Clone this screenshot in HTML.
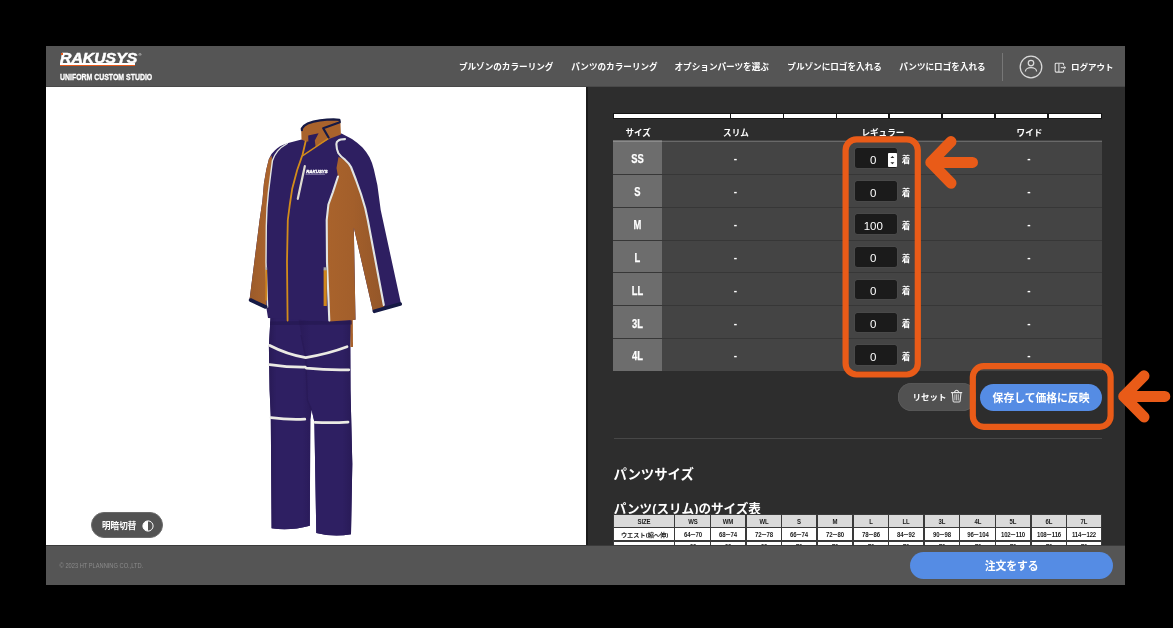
<!DOCTYPE html>
<html lang="ja">
<head>
<meta charset="utf-8">
<title>RAKUSYS UNIFORM CUSTOM STUDIO</title>
<style>
*{box-sizing:border-box;margin:0;padding:0}
html,body{width:1173px;height:628px;overflow:hidden;background:#000}
body{position:relative;font-family:"Liberation Sans",sans-serif;color:#fff}
.abs,.t{position:absolute}
.t{overflow:visible;display:block}
#win{position:absolute;left:46px;top:46px;width:1079px;height:539px;background:#2d2d2d;overflow:hidden;filter:blur(.35px)}
.txt{position:absolute;white-space:nowrap;line-height:1}
.t>svg{display:block;overflow:visible}
.rt{white-space:nowrap;line-height:1;font-weight:bold;color:#fff;font-family:"Liberation Sans","Noto Sans CJK JP",sans-serif}
</style>
</head>
<body>

<div id="win"><div class="abs" style="left:-46px;top:-46px;width:1173px;height:628px">
<div class="abs" style="left:46px;top:46px;width:1079px;height:40.8px;background:#555;border-bottom:1.5px solid #494949"></div>
<div class="abs" style="left:46px;top:86.8px;width:540.2px;height:460px;background:#fff"></div>
<div class="abs" style="left:586.2px;top:86.8px;width:1.7px;height:460px;background:#1b1b1b"></div>
<svg class="t" style="left:58px;top:48px" width="90" height="18" viewBox="58 48 90 18"><text x="60" y="62.9" font-family="Liberation Sans, sans-serif" font-weight="bold" font-style="italic" font-size="13.8" fill="#fff" stroke="#fff" stroke-width=".45" textLength="77.2" lengthAdjust="spacingAndGlyphs">RAKUSYS</text></svg>
<div class="abs" style="left:59.5px;top:63px;width:75px;height:2px;background:#fff"></div>
<div class="abs" style="left:59.5px;top:65px;width:75px;height:1.2px;background:#e8591a"></div>
<div class="abs" style="left:61px;top:53px;width:2px;height:2px;background:#e8591a"></div>
<div class="txt" style="left:138.5px;top:52.6px;font-size:4px;">&reg;</div>
<svg class="t" style="left:58px;top:68px" width="110" height="16" viewBox="58 68 110 16"><text x="60" y="80.05" font-family="Liberation Sans, sans-serif" font-weight="bold" font-size="9.6" fill="#fff" stroke="#fff" stroke-width=".3" textLength="92.2" lengthAdjust="spacingAndGlyphs">UNIFORM CUSTOM STUDIO</text></svg>
<span class="t rt" style="left:458.9px;top:63px;width:95.9px;height:10.9px;font-size:8.6px;">プルゾンのカラーリング</span>
<span class="t rt" style="left:571.3px;top:63px;width:87.3px;height:10.9px;font-size:8.6px;">パンツのカラーリング</span>
<span class="t rt" style="left:674.5px;top:63px;width:95.9px;height:10.9px;font-size:8.6px;">オプションパーツを選ぶ</span>
<span class="t rt" style="left:787.3px;top:63px;width:95.9px;height:10.9px;font-size:8.6px;">プルゾンにロゴを入れる</span>
<span class="t rt" style="left:899.3px;top:63px;width:87.3px;height:10.9px;font-size:8.6px;">パンツにロゴを入れる</span>
<div class="abs" style="left:1002.3px;top:52.5px;width:1px;height:28.5px;background:#777"></div>
<svg class="t" style="left:1019.4px;top:54.7px" width="24" height="24" viewBox="-12 -12 24 24" fill="none" stroke="#dadada" stroke-width="1.25">
<circle cx="0" cy="0" r="10.8"/><circle cx="0" cy="-4" r="2.75"/><path d="M-5.6 4.5A5.6 3.9 0 0 1 5.6 4.5"/></svg>
<svg class="t" style="left:1054px;top:62px" width="13" height="11" viewBox="0 0 13 11" fill="none" stroke="#e0e0e0" stroke-width="1.05" stroke-linejoin="round">
<path d="M9.6 3.4V2.2a1 1 0 0 0-1-1H2.2a1 1 0 0 0-1 1v6.9a1 1 0 0 0 1 1h6.4a1 1 0 0 0 1-1V7.9"/><path d="M4.9 1.4v8.5"/><path d="M6.8 5.65h3.4"/><path d="M10.2 4.2l1.7 1.45-1.7 1.45z" fill="#e0e0e0" stroke-width=".5"/></svg>
<span class="t rt" style="left:1070.9px;top:63.3px;width:44.4px;height:10.8px;font-size:8.5px;">ログアウト</span>
<div class="abs" style="left:613px;top:113px;width:489.4px;height:6.2px;background:#151515"></div>
<div class="abs" style="left:613.8px;top:113.6px;width:116px;height:4.6px;background:#fff"></div>
<div class="abs" style="left:731.4px;top:113.6px;width:51.3px;height:4.6px;background:#fff"></div>
<div class="abs" style="left:784.3px;top:113.6px;width:51.3px;height:4.6px;background:#fff"></div>
<div class="abs" style="left:837.2px;top:113.6px;width:51.3px;height:4.6px;background:#fff"></div>
<div class="abs" style="left:890.1px;top:113.6px;width:51.3px;height:4.6px;background:#fff"></div>
<div class="abs" style="left:943px;top:113.6px;width:51.3px;height:4.6px;background:#fff"></div>
<div class="abs" style="left:995.9px;top:113.6px;width:51.3px;height:4.6px;background:#fff"></div>
<div class="abs" style="left:1048.8px;top:113.6px;width:52px;height:4.6px;background:#fff"></div>
<span class="t rt" style="left:625.4px;top:128.8px;width:27.4px;height:10.8px;font-size:8.6px;">サイズ</span>
<span class="t rt" style="left:723.1px;top:128.8px;width:27.4px;height:10.8px;font-size:8.6px;">スリム</span>
<span class="t rt" style="left:861.4px;top:128.8px;width:45px;height:10.8px;font-size:8.6px;">レギュラー</span>
<span class="t rt" style="left:1016.6px;top:128.8px;width:27.4px;height:10.8px;font-size:8.6px;">ワイド</span>
<div class="abs" style="left:613.3px;top:140.1px;width:488.5px;height:34.2px;background:#444"></div>
<div class="abs" style="left:613.3px;top:140.1px;width:48.9px;height:34.2px;background:#6d6d6d"></div>
<div class="abs" style="left:613.3px;top:140.9px;width:488.5px;height:1.3px;background:rgba(255,255,255,.2)"></div>
<div class="txt" style="left:613.3px;width:48.9px;text-align:center;top:153.2px;font-size:12.2px;font-weight:bold;-webkit-text-stroke:.25px #fff;transform:scaleX(.77)">SS</div>
<div class="txt" style="left:725px;width:21px;text-align:center;top:154.2px;font-size:10px;font-weight:bold">-</div>
<div class="txt" style="left:1018.5px;width:21px;text-align:center;top:154.2px;font-size:10px;font-weight:bold">-</div>
<div class="abs" style="left:855px;top:148.2px;width:41.8px;height:19.8px;border-radius:2.5px;background:#1b1b1b;box-shadow:0 0 0 .5px #4f4f4f"></div>
<div class="txt" style="left:855px;width:36.6px;text-align:center;top:154.8px;font-size:11.5px">0</div>
<span class="t rt" style="left:901.8px;top:156px;width:9.8px;height:10.8px;font-size:8.6px;">着</span>
<div class="abs" style="left:888.2px;top:152.7px;width:8.7px;height:13.9px;background:#fff;border-radius:.8px"></div>
<svg class="t" style="left:888.2px;top:152.7px" width="8.7" height="13.9" viewBox="0 0 8.7 13.9"><path d="M2.4 5l2-2.1 2 2.1zM2.4 9.2l2 2.1 2-2.1z" fill="#2a2a2a"/></svg>
<div class="abs" style="left:613.3px;top:174.2px;width:488.5px;height:32.8px;background:#444"></div>
<div class="abs" style="left:613.3px;top:174.2px;width:48.9px;height:32.8px;background:#6d6d6d"></div>
<div class="abs" style="left:613.3px;top:173.8px;width:488.5px;height:1px;background:#373737"></div>
<div class="txt" style="left:613.3px;width:48.9px;text-align:center;top:186.1px;font-size:12.2px;font-weight:bold;-webkit-text-stroke:.25px #fff;transform:scaleX(.77)">S</div>
<div class="txt" style="left:725px;width:21px;text-align:center;top:187.1px;font-size:10px;font-weight:bold">-</div>
<div class="txt" style="left:1018.5px;width:21px;text-align:center;top:187.1px;font-size:10px;font-weight:bold">-</div>
<div class="abs" style="left:855px;top:181.1px;width:41.8px;height:19.8px;border-radius:2.5px;background:#1b1b1b;box-shadow:0 0 0 .5px #4f4f4f"></div>
<div class="txt" style="left:855px;width:36.6px;text-align:center;top:187.7px;font-size:11.5px">0</div>
<span class="t rt" style="left:901.8px;top:188.9px;width:9.8px;height:10.8px;font-size:8.6px;">着</span>
<div class="abs" style="left:613.3px;top:207.1px;width:488.5px;height:32.8px;background:#444"></div>
<div class="abs" style="left:613.3px;top:207.1px;width:48.9px;height:32.8px;background:#6d6d6d"></div>
<div class="abs" style="left:613.3px;top:206.6px;width:488.5px;height:1px;background:#373737"></div>
<div class="txt" style="left:613.3px;width:48.9px;text-align:center;top:218.9px;font-size:12.2px;font-weight:bold;-webkit-text-stroke:.25px #fff;transform:scaleX(.77)">M</div>
<div class="txt" style="left:725px;width:21px;text-align:center;top:219.9px;font-size:10px;font-weight:bold">-</div>
<div class="txt" style="left:1018.5px;width:21px;text-align:center;top:219.9px;font-size:10px;font-weight:bold">-</div>
<div class="abs" style="left:855px;top:213.9px;width:41.8px;height:19.8px;border-radius:2.5px;background:#1b1b1b;box-shadow:0 0 0 .5px #4f4f4f"></div>
<div class="txt" style="left:855px;width:36.6px;text-align:center;top:220.5px;font-size:11.5px">100</div>
<span class="t rt" style="left:901.8px;top:221.7px;width:9.8px;height:10.8px;font-size:8.6px;">着</span>
<div class="abs" style="left:613.3px;top:240px;width:488.5px;height:32.8px;background:#444"></div>
<div class="abs" style="left:613.3px;top:240px;width:48.9px;height:32.8px;background:#6d6d6d"></div>
<div class="abs" style="left:613.3px;top:239.5px;width:488.5px;height:1px;background:#373737"></div>
<div class="txt" style="left:613.3px;width:48.9px;text-align:center;top:251.8px;font-size:12.2px;font-weight:bold;-webkit-text-stroke:.25px #fff;transform:scaleX(.77)">L</div>
<div class="txt" style="left:725px;width:21px;text-align:center;top:252.8px;font-size:10px;font-weight:bold">-</div>
<div class="txt" style="left:1018.5px;width:21px;text-align:center;top:252.8px;font-size:10px;font-weight:bold">-</div>
<div class="abs" style="left:855px;top:246.8px;width:41.8px;height:19.8px;border-radius:2.5px;background:#1b1b1b;box-shadow:0 0 0 .5px #4f4f4f"></div>
<div class="txt" style="left:855px;width:36.6px;text-align:center;top:253.4px;font-size:11.5px">0</div>
<span class="t rt" style="left:901.8px;top:254.6px;width:9.8px;height:10.8px;font-size:8.6px;">着</span>
<div class="abs" style="left:613.3px;top:272.8px;width:488.5px;height:32.9px;background:#444"></div>
<div class="abs" style="left:613.3px;top:272.8px;width:48.9px;height:32.9px;background:#6d6d6d"></div>
<div class="abs" style="left:613.3px;top:272.3px;width:488.5px;height:1px;background:#373737"></div>
<div class="txt" style="left:613.3px;width:48.9px;text-align:center;top:284.6px;font-size:12.2px;font-weight:bold;-webkit-text-stroke:.25px #fff;transform:scaleX(.77)">LL</div>
<div class="txt" style="left:725px;width:21px;text-align:center;top:285.6px;font-size:10px;font-weight:bold">-</div>
<div class="txt" style="left:1018.5px;width:21px;text-align:center;top:285.6px;font-size:10px;font-weight:bold">-</div>
<div class="abs" style="left:855px;top:279.6px;width:41.8px;height:19.8px;border-radius:2.5px;background:#1b1b1b;box-shadow:0 0 0 .5px #4f4f4f"></div>
<div class="txt" style="left:855px;width:36.6px;text-align:center;top:286.2px;font-size:11.5px">0</div>
<span class="t rt" style="left:901.8px;top:287.4px;width:9.8px;height:10.8px;font-size:8.6px;">着</span>
<div class="abs" style="left:613.3px;top:305.6px;width:488.5px;height:32.9px;background:#444"></div>
<div class="abs" style="left:613.3px;top:305.6px;width:48.9px;height:32.9px;background:#6d6d6d"></div>
<div class="abs" style="left:613.3px;top:305.1px;width:488.5px;height:1px;background:#373737"></div>
<div class="txt" style="left:613.3px;width:48.9px;text-align:center;top:317.5px;font-size:12.2px;font-weight:bold;-webkit-text-stroke:.25px #fff;transform:scaleX(.77)">3L</div>
<div class="txt" style="left:725px;width:21px;text-align:center;top:318.5px;font-size:10px;font-weight:bold">-</div>
<div class="txt" style="left:1018.5px;width:21px;text-align:center;top:318.5px;font-size:10px;font-weight:bold">-</div>
<div class="abs" style="left:855px;top:312.5px;width:41.8px;height:19.8px;border-radius:2.5px;background:#1b1b1b;box-shadow:0 0 0 .5px #4f4f4f"></div>
<div class="txt" style="left:855px;width:36.6px;text-align:center;top:319.1px;font-size:11.5px">0</div>
<span class="t rt" style="left:901.8px;top:320.3px;width:9.8px;height:10.8px;font-size:8.6px;">着</span>
<div class="abs" style="left:613.3px;top:338.5px;width:488.5px;height:32.9px;background:#444"></div>
<div class="abs" style="left:613.3px;top:338.5px;width:48.9px;height:32.9px;background:#6d6d6d"></div>
<div class="abs" style="left:613.3px;top:338px;width:488.5px;height:1px;background:#373737"></div>
<div class="txt" style="left:613.3px;width:48.9px;text-align:center;top:350.3px;font-size:12.2px;font-weight:bold;-webkit-text-stroke:.25px #fff;transform:scaleX(.77)">4L</div>
<div class="txt" style="left:725px;width:21px;text-align:center;top:351.3px;font-size:10px;font-weight:bold">-</div>
<div class="txt" style="left:1018.5px;width:21px;text-align:center;top:351.3px;font-size:10px;font-weight:bold">-</div>
<div class="abs" style="left:855px;top:345.3px;width:41.8px;height:19.8px;border-radius:2.5px;background:#1b1b1b;box-shadow:0 0 0 .5px #4f4f4f"></div>
<div class="txt" style="left:855px;width:36.6px;text-align:center;top:351.9px;font-size:11.5px">0</div>
<span class="t rt" style="left:901.8px;top:353.1px;width:9.8px;height:10.8px;font-size:8.6px;">着</span>
<div class="abs" style="left:898.2px;top:383.3px;width:78px;height:27.3px;border-radius:13.65px;background:#515151;box-shadow:inset 0 0 0 .6px #5d5d5d"></div>
<span class="t rt" style="left:912.6px;top:393.4px;width:36.3px;height:10.6px;font-size:8.5px;">リセット</span>
<svg class="t" style="left:950px;top:388px" width="14" height="16" viewBox="950 388 14 16" fill="none" stroke="#e6e6e6" stroke-width="1.05" stroke-linecap="round" stroke-linejoin="round">
<path d="M951.4 392.6H961.8M954.3 392.3Q956.6 388.4 958.9 392.3M952.4 393.4L953.1 401.3Q953.2 402 954 402H959.2Q960 402 960.1 401.3L960.9 393.4"/><path stroke-width=".8" d="M954.9 394.6V400M956.6 394.6V400M958.3 394.6V400"/></svg>
<div class="abs" style="left:980px;top:383.5px;width:122.2px;height:27.2px;border-radius:13.6px;background:#558ce4"></div>
<span class="t rt" style="left:992.6px;top:392.6px;width:98.2px;height:12.8px;font-size:10.8px;">保存して価格に反映</span>
<div class="abs" style="left:613.8px;top:437.6px;width:488px;height:1px;background:#474747"></div>
<span class="t rt" style="left:613.4px;top:467.6px;width:81.5px;height:15.2px;font-size:13.4px;">パンツサイズ</span>
<span class="t rt" style="left:613.8px;top:502.6px;width:148.5px;height:15px;font-size:12.6px;">パンツ(スリム)のサイズ表</span>
<div class="abs" style="left:613.4px;top:514.4px;width:488.80000000000007px;height:40px;background:#3a3a3a"></div>
<div class="abs" style="left:614.2px;top:515.3px;width:59.8px;height:11.4px;background:#dadada"></div>
<div class="txt sz" style="left:624.1px;top:519px;width:40px;text-align:center">SIZE</div>
<div class="abs" style="left:675.4px;top:515.3px;width:34.2px;height:11.4px;background:#dadada"></div>
<div class="txt sz" style="left:672.5px;top:519px;width:40px;text-align:center">WS</div>
<div class="abs" style="left:711px;top:515.3px;width:34.2px;height:11.4px;background:#dadada"></div>
<div class="txt sz" style="left:708.1px;top:519px;width:40px;text-align:center">WM</div>
<div class="abs" style="left:746.7px;top:515.3px;width:34.2px;height:11.4px;background:#dadada"></div>
<div class="txt sz" style="left:743.8px;top:519px;width:40px;text-align:center">WL</div>
<div class="abs" style="left:782.3px;top:515.3px;width:34.2px;height:11.4px;background:#dadada"></div>
<div class="txt sz" style="left:779.4px;top:519px;width:40px;text-align:center">S</div>
<div class="abs" style="left:817.9px;top:515.3px;width:34.2px;height:11.4px;background:#dadada"></div>
<div class="txt sz" style="left:815px;top:519px;width:40px;text-align:center">M</div>
<div class="abs" style="left:853.5px;top:515.3px;width:34.2px;height:11.4px;background:#dadada"></div>
<div class="txt sz" style="left:850.6px;top:519px;width:40px;text-align:center">L</div>
<div class="abs" style="left:889.2px;top:515.3px;width:34.2px;height:11.4px;background:#dadada"></div>
<div class="txt sz" style="left:886.3px;top:519px;width:40px;text-align:center">LL</div>
<div class="abs" style="left:924.8px;top:515.3px;width:34.2px;height:11.4px;background:#dadada"></div>
<div class="txt sz" style="left:921.9px;top:519px;width:40px;text-align:center">3L</div>
<div class="abs" style="left:960.4px;top:515.3px;width:34.2px;height:11.4px;background:#dadada"></div>
<div class="txt sz" style="left:957.5px;top:519px;width:40px;text-align:center">4L</div>
<div class="abs" style="left:996px;top:515.3px;width:34.2px;height:11.4px;background:#dadada"></div>
<div class="txt sz" style="left:993.1px;top:519px;width:40px;text-align:center">5L</div>
<div class="abs" style="left:1031.7px;top:515.3px;width:34.2px;height:11.4px;background:#dadada"></div>
<div class="txt sz" style="left:1028.8px;top:519px;width:40px;text-align:center">6L</div>
<div class="abs" style="left:1067.3px;top:515.3px;width:34.2px;height:11.4px;background:#dadada"></div>
<div class="txt sz" style="left:1064.4px;top:519px;width:40px;text-align:center">7L</div>
<div class="abs" style="left:614.2px;top:527.9px;width:59.8px;height:12.6px;background:#fff"></div>
<span class="t rt" style="left:620.9px;top:532.1px;width:49.4px;height:8.7px;font-size:6.2px;color:#1a1a1a;">ウエスト(縮〜伸)</span>
<div class="abs" style="left:675.4px;top:527.9px;width:34.2px;height:12.6px;background:#fff"></div>
<div class="txt sz" style="left:672.5px;top:532.1px;width:40px;text-align:center">64<span class="tl">~</span>70</div>
<div class="abs" style="left:711px;top:527.9px;width:34.2px;height:12.6px;background:#fff"></div>
<div class="txt sz" style="left:708.1px;top:532.1px;width:40px;text-align:center">68<span class="tl">~</span>74</div>
<div class="abs" style="left:746.7px;top:527.9px;width:34.2px;height:12.6px;background:#fff"></div>
<div class="txt sz" style="left:743.8px;top:532.1px;width:40px;text-align:center">72<span class="tl">~</span>78</div>
<div class="abs" style="left:782.3px;top:527.9px;width:34.2px;height:12.6px;background:#fff"></div>
<div class="txt sz" style="left:779.4px;top:532.1px;width:40px;text-align:center">66<span class="tl">~</span>74</div>
<div class="abs" style="left:817.9px;top:527.9px;width:34.2px;height:12.6px;background:#fff"></div>
<div class="txt sz" style="left:815px;top:532.1px;width:40px;text-align:center">72<span class="tl">~</span>80</div>
<div class="abs" style="left:853.5px;top:527.9px;width:34.2px;height:12.6px;background:#fff"></div>
<div class="txt sz" style="left:850.6px;top:532.1px;width:40px;text-align:center">78<span class="tl">~</span>86</div>
<div class="abs" style="left:889.2px;top:527.9px;width:34.2px;height:12.6px;background:#fff"></div>
<div class="txt sz" style="left:886.3px;top:532.1px;width:40px;text-align:center">84<span class="tl">~</span>92</div>
<div class="abs" style="left:924.8px;top:527.9px;width:34.2px;height:12.6px;background:#fff"></div>
<div class="txt sz" style="left:921.9px;top:532.1px;width:40px;text-align:center">90<span class="tl">~</span>98</div>
<div class="abs" style="left:960.4px;top:527.9px;width:34.2px;height:12.6px;background:#fff"></div>
<div class="txt sz" style="left:957.5px;top:532.1px;width:40px;text-align:center">96<span class="tl">~</span>104</div>
<div class="abs" style="left:996px;top:527.9px;width:34.2px;height:12.6px;background:#fff"></div>
<div class="txt sz" style="left:993.1px;top:532.1px;width:40px;text-align:center">102<span class="tl">~</span>110</div>
<div class="abs" style="left:1031.7px;top:527.9px;width:34.2px;height:12.6px;background:#fff"></div>
<div class="txt sz" style="left:1028.8px;top:532.1px;width:40px;text-align:center">108<span class="tl">~</span>116</div>
<div class="abs" style="left:1067.3px;top:527.9px;width:34.2px;height:12.6px;background:#fff"></div>
<div class="txt sz" style="left:1064.4px;top:532.1px;width:40px;text-align:center">114<span class="tl">~</span>122</div>
<div class="abs" style="left:614.2px;top:541.7px;width:59.8px;height:11.3px;background:#fff"></div>
<span class="t rt" style="left:637.8px;top:544.8px;width:14.2px;height:8.6px;font-size:6.2px;color:#1a1a1a;">股下</span>
<div class="abs" style="left:675.4px;top:541.7px;width:34.2px;height:11.3px;background:#fff"></div>
<div class="txt sz" style="left:672.5px;top:543.7px;width:40px;text-align:center">69</div>
<div class="abs" style="left:711px;top:541.7px;width:34.2px;height:11.3px;background:#fff"></div>
<div class="txt sz" style="left:708.1px;top:543.7px;width:40px;text-align:center">69</div>
<div class="abs" style="left:746.7px;top:541.7px;width:34.2px;height:11.3px;background:#fff"></div>
<div class="txt sz" style="left:743.8px;top:543.7px;width:40px;text-align:center">69</div>
<div class="abs" style="left:782.3px;top:541.7px;width:34.2px;height:11.3px;background:#fff"></div>
<div class="txt sz" style="left:779.4px;top:543.7px;width:40px;text-align:center">72</div>
<div class="abs" style="left:817.9px;top:541.7px;width:34.2px;height:11.3px;background:#fff"></div>
<div class="txt sz" style="left:815px;top:543.7px;width:40px;text-align:center">72</div>
<div class="abs" style="left:853.5px;top:541.7px;width:34.2px;height:11.3px;background:#fff"></div>
<div class="txt sz" style="left:850.6px;top:543.7px;width:40px;text-align:center">72</div>
<div class="abs" style="left:889.2px;top:541.7px;width:34.2px;height:11.3px;background:#fff"></div>
<div class="txt sz" style="left:886.3px;top:543.7px;width:40px;text-align:center">72</div>
<div class="abs" style="left:924.8px;top:541.7px;width:34.2px;height:11.3px;background:#fff"></div>
<div class="txt sz" style="left:921.9px;top:543.7px;width:40px;text-align:center">72</div>
<div class="abs" style="left:960.4px;top:541.7px;width:34.2px;height:11.3px;background:#fff"></div>
<div class="txt sz" style="left:957.5px;top:543.7px;width:40px;text-align:center">72</div>
<div class="abs" style="left:996px;top:541.7px;width:34.2px;height:11.3px;background:#fff"></div>
<div class="txt sz" style="left:993.1px;top:543.7px;width:40px;text-align:center">72</div>
<div class="abs" style="left:1031.7px;top:541.7px;width:34.2px;height:11.3px;background:#fff"></div>
<div class="txt sz" style="left:1028.8px;top:543.7px;width:40px;text-align:center">72</div>
<div class="abs" style="left:1067.3px;top:541.7px;width:34.2px;height:11.3px;background:#fff"></div>
<div class="txt sz" style="left:1064.4px;top:543.7px;width:40px;text-align:center">72</div>
<style>.sz{font-size:6.7px;font-weight:bold;color:#1a1a1a;letter-spacing:-0.15px;transform:scaleX(.9)}.tl{display:inline-block;transform:scaleX(1.5);margin:0 1px}</style>
<div class="abs" style="left:46px;top:545.3px;width:1079px;height:40px;background:#555;border-top:1.4px solid #3a3a3a"></div>
<svg class="t" style="left:58px;top:556px" width="100" height="16" viewBox="58 556 100 16"><text x="59.6" y="568.2" font-family="Liberation Sans, sans-serif" font-size="7.4" fill="#8b8b8b" textLength="83.6" lengthAdjust="spacingAndGlyphs">&#169; 2023 HT PLANNING CO.,LTD.</text></svg>
<div class="abs" style="left:910px;top:552px;width:203.2px;height:27.1px;border-radius:13.6px;background:#558ce4"></div>
<span class="t rt" style="left:984.7px;top:560.9px;width:55px;height:12.8px;font-size:10.8px;">注文をする</span>
<div class="abs" style="left:91.2px;top:512px;width:72px;height:26px;border-radius:13px;background:#535353;border:0.8px solid #6a6a6a"></div>
<span class="t rt" style="left:102px;top:522.2px;width:36px;height:10.6px;font-size:8.6px;">明暗切替</span>
<svg class="t" style="left:141.8px;top:520px" width="12" height="12" viewBox="0 0 12 12"><circle cx="6" cy="6" r="5.1" fill="none" stroke="#fff" stroke-width="1"/><path d="M6 .9a5.1 5.1 0 0 0 0 10.2z" fill="#fff"/></svg>
<svg class="t" style="left:0;top:0" width="1173" height="628" viewBox="0 0 1173 628">
<defs>
<linearGradient id="go" gradientUnits="userSpaceOnUse" x1="327" x2="385" y1="0" y2="0"><stop offset="0" stop-color="#a9632c"/><stop offset=".45" stop-color="#a35f2b"/><stop offset="1" stop-color="#935629"/></linearGradient>
<linearGradient id="gol" gradientUnits="userSpaceOnUse" x1="250" x2="270" y1="0" y2="0"><stop offset="0" stop-color="#9c5b2a"/><stop offset="1" stop-color="#ac652d"/></linearGradient>
<linearGradient id="gleg1" gradientUnits="userSpaceOnUse" x1="269" x2="311" y1="0" y2="0"><stop offset="0" stop-color="#281a56"/><stop offset=".18" stop-color="#2e1f62"/><stop offset=".8" stop-color="#2e1f62"/><stop offset="1" stop-color="#2a1b5a"/></linearGradient>
<linearGradient id="gleg2" gradientUnits="userSpaceOnUse" x1="300" x2="353" y1="0" y2="0"><stop offset="0" stop-color="#2a1b5a"/><stop offset=".2" stop-color="#2e1f62"/><stop offset=".8" stop-color="#2e1f62"/><stop offset="1" stop-color="#281a56"/></linearGradient>
</defs>
<!-- PANTS -->
<g id="pants">
<path fill="#2e1f62" d="M270.6 316L268.9 346L269.6 390L270.8 417L271.6 528.2Q289.3 531.2 309.8 525.7L310.3 419.6L311.6 409.7L314.4 422L316.3 533.1Q333.8 537.4 351 534.3L352.3 464L350.5 390L350.3 346L351.2 316Z"/>
<path fill="url(#gleg1)" d="M270.6 316L268.9 346L269.6 390L270.8 417L271.6 528.2Q289.3 531.2 309.8 525.7L310.3 419.6L311.6 409.7L307.4 400L305.7 357.4L297.8 316Z"/>
<path fill="url(#gleg2)" d="M297.8 316L305.7 357.4L307.4 400L311.6 409.7L314.4 422L316.3 533.1Q333.8 537.4 351 534.3L352.3 464L350.5 390L350.3 346L351.2 316Z"/>
<path fill="none" stroke="#291a58" stroke-width="1.2" d="M301 335L305.7 357.4L307.4 400L311.6 409.7"/>
<path fill="#a8622c" d="M350.6 318L352.8 318L353 347L350.4 347Z"/>
<path fill="none" stroke="#ebeae4" stroke-width="2.8" stroke-linecap="round" d="M269.8 345.5Q287 354.5 305.7 357.6Q328 354 347 346.8M269.6 364.6Q288 367.4 305.3 367.2M306.3 368.1Q328 370.4 348.8 369.8M271 417.7Q288 420 304.8 419.2M315 422.3Q332 423 348 422.1"/>
<path fill="#23164c" opacity=".55" d="M270 321.5L352 320.5L352 324.5L270 325Z"/>
</g>
<!-- JACKET -->
<g id="jacket">
<path fill="#2e1f61" d="M301.5 139.6L287.3 143.3Q279 146 275 150.3Q270.5 154 268.9 159L266.3 169.5L263.9 183.5L262.4 201L259.6 220L249.6 299.3L266.3 307.2L268 318L329.3 321.5L355.5 319.8L353.8 227.5L373 311.5L401 303.7L380.7 210L377.4 185.3L373.9 169.5Q372 162 369.5 157.3Q366.5 152 362.5 147.6Q357.5 142.5 352 138.9L341.5 133.6Z"/>
<!-- left orange sleeve -->
<path fill="url(#gol)" d="M271.5 155.5L268.9 159L266.3 169.5L263.9 183.5L262.4 201L259.6 220L249.6 299.3L266.3 307.2L266 262.5L266.3 226L267 208L268.4 192.3L270.6 174.8L272.4 160.8Z"/>
<!-- right orange panel -->
<path fill="url(#go)" d="M338.5 157L336.5 168L338 176.5L332.8 192.3L328.4 204.5L326.7 220L327 262L329.3 321.5L355.5 319.8L353.8 227.5L373 311.5L384.4 308.4L367.8 220L365.2 208L360.8 194L355.5 180L350.5 167L345 159.7Z"/>
<!-- piping -->
<g fill="none" stroke="#e2e5e4" stroke-width="2.1" stroke-linecap="round" stroke-linejoin="round">
<path d="M287.3 143.5Q281 147 277.6 151.1Q274 155.5 272.4 160.8L270.6 174.8L268.4 192.3L267 208L266.3 226L266 262.5L267.6 307" stroke-width="1.4"/>
<path d="M345 139.1Q340 139.2 338.3 140.6Q336.2 142 336.4 144.4Q336.5 149 338.3 153Q341 157 345 159.7Q348.8 163 351 167L356 180L361 194L365.2 208L367.8 220L383.8 305"/>
<path d="M338 176.5L332.8 192.3L328.4 204.5L326.7 220L327 262L329.3 320.5"/>
</g>
<!-- cuffs -->
<path fill="none" stroke="#161a45" stroke-width="3.6" stroke-linecap="round" d="M250.6 300L265.6 307M374.4 311.3L400.2 304"/>
<!-- collar -->
<path fill="#a9632c" d="M301.2 128.2Q304 125 307.7 123.4Q313 121 320.1 120Q327 119.2 333.5 119.1L340 119.6L340.4 122.4L340.9 134.4L329.7 138.7L315.3 146.8L305.8 141.5L301.5 139.6Z"/>
<path fill="#2b1c5c" d="M308.2 135.6L318.6 133.2L314.8 140.4L315.6 146.8L306 150L305.8 141.5L308.4 141.4Z"/>
<path fill="none" stroke="#161a45" stroke-width="2.2" stroke-linecap="round" stroke-linejoin="round" d="M301.9 130.2L301.8 128.6Q304 125.3 307.7 123.6Q313 121.3 320.1 120.3Q327 119.5 333.5 119.4L339.4 119.9L339.8 122.2L323.2 128.2L328.6 137.5"/>
<!-- zipper -->
<path fill="none" stroke="#d38c1b" stroke-width="1.8" stroke-linecap="round" stroke-linejoin="round" d="M305.6 141.5L302.6 154.5L297.2 170L292.2 188.8L289.8 204.5L287.8 220L287 262L287.6 320.5"/><path fill="none" stroke="#d38c1b" stroke-width="1.3" stroke-linecap="round" d="M327.8 138.9L302.8 155.6"/>
<!-- pockets -->
<path fill="#cf861d" d="M323.6 269.5h3.2v36.5h-3.2z"/><path fill="#a8a8a8" d="M323.6 267.3h3.2v3h-3.2z"/>
<path fill="#cf861d" d="M265.4 269.5h1.8v31h-1.8z"/><path fill="#a8a8a8" d="M265.4 267.3h1.8v2.5h-1.8z"/>
<!-- chest pocket + logo -->
<path fill="none" stroke="#dedbd0" stroke-width="2.2" stroke-linecap="round" d="M304.8 166.2L297.8 198.8"/>
<text x="306.2" y="172.6" fill="#fff" font-family="Liberation Sans, sans-serif" font-weight="bold" font-style="italic" stroke="#fff" stroke-width=".35" font-size="4.4" textLength="21.5" lengthAdjust="spacingAndGlyphs">RAKUSYS</text>
<path fill="none" stroke="#cfcce6" stroke-width=".6" d="M305.6 174.2h19.5"/>
</g>
</svg>

</div></div>
<svg class="t" style="left:0;top:0" width="1173" height="628" viewBox="0 0 1173 628" fill="none" stroke="#e95b18" stroke-linecap="round" stroke-linejoin="round">
<rect x="845.6" y="139.3" width="72.2" height="235.2" rx="11" ry="11" stroke-width="6.2"/>
<rect x="972.8" y="366.1" width="137.8" height="60.7" rx="11" ry="11" stroke-width="6.2"/>
<g stroke-width="11">
<path d="M951 141.6L930.8 162.4L951 183.2M932 162.4H972.5"/>
<path d="M1144 375.8L1123.7 396.4L1144 417M1124.7 396.4H1164.8"/>
</g>
</svg>

</body></html>
